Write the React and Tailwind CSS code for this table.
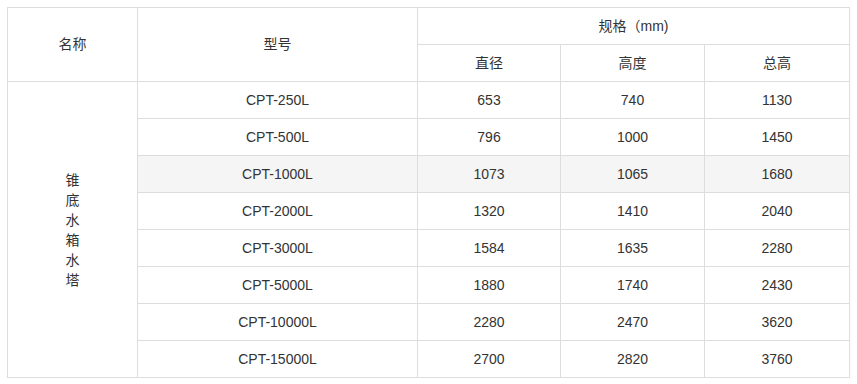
import React from 'react';

const rows = [
  ['CPT-250L', '653', '740', '1130'],
  ['CPT-500L', '796', '1000', '1450'],
  ['CPT-1000L', '1073', '1065', '1680'],
  ['CPT-2000L', '1320', '1410', '2040'],
  ['CPT-3000L', '1584', '1635', '2280'],
  ['CPT-5000L', '1880', '1740', '2430'],
  ['CPT-10000L', '2280', '2470', '3620'],
  ['CPT-15000L', '2700', '2820', '3760'],
];

const cell = 'border border-[#dddddd] text-center align-middle p-0';

export default function App() {
  return (
    <div className="min-h-screen bg-white p-[7px] text-[14px] text-[#333333] font-['Liberation_Sans','Noto_Sans_CJK_SC',sans-serif]">
      <table className="w-[842px] table-fixed border-collapse">
        <colgroup>
          <col className="w-[130px]" />
          <col className="w-[280px]" />
          <col className="w-[143px]" />
          <col className="w-[144px]" />
          <col className="w-[145px]" />
        </colgroup>
        <thead>
          <tr className="h-[37px]">
            <th rowSpan={2} className={`${cell} font-normal`}>名称</th>
            <th rowSpan={2} className={`${cell} font-normal`}>型号</th>
            <th colSpan={3} className={`${cell} font-normal`}>规格（mm)</th>
          </tr>
          <tr className="h-[37px]">
            <th className={`${cell} font-normal`}>直径</th>
            <th className={`${cell} font-normal`}>高度</th>
            <th className={`${cell} font-normal`}>总高</th>
          </tr>
        </thead>
        <tbody>
          {rows.map((r, i) => (
            <tr key={r[0]} className={`h-[37px] ${i === 2 ? 'bg-[#f5f5f5]' : ''}`}>
              {i === 0 && (
                <td rowSpan={rows.length} className={`${cell} bg-white leading-[20px]`}>
                  锥<br />底<br />水<br />箱<br />水<br />塔
                </td>
              )}
              {r.map((v) => (
                <td key={v} className={cell}>{v}</td>
              ))}
            </tr>
          ))}
        </tbody>
      </table>
    </div>
  );
}
